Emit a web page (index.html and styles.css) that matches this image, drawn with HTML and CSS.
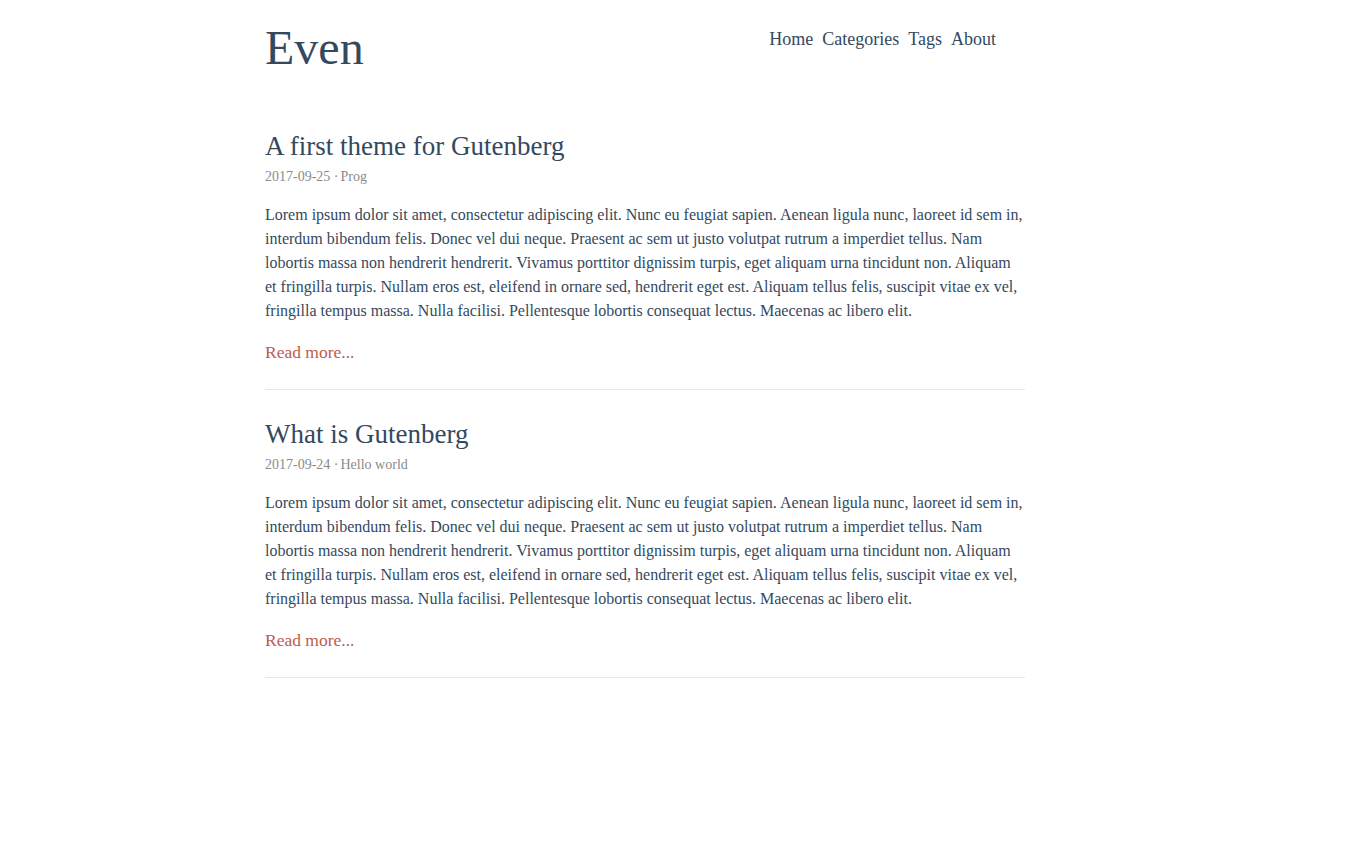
FILE: index.html
```html
<!DOCTYPE html>
<html>
<head>
<meta charset="utf-8">
<title>Even</title>
<link rel="stylesheet" href="styles.css">
</head>
<body>
<div class="container">
  <header class="header">
    <a class="logo" href="#">Even</a>
    <nav class="nav">
      <a href="#">Home</a>
      <a href="#">Categories</a>
      <a href="#">Tags</a>
      <a href="#">About</a>
    </nav>
  </header>
  <main class="posts">
    <article class="post">
      <h1 class="post-title"><a href="#">A first theme for Gutenberg</a></h1>
      <div class="post-meta">2017-09-25 <span class="dot">·</span><a href="#">Prog</a></div>
      <p class="post-summary">Lorem ipsum dolor sit amet, consectetur adipiscing elit. Nunc eu feugiat sapien. Aenean ligula nunc, laoreet id sem in, interdum bibendum felis. Donec vel dui neque. Praesent ac sem ut justo volutpat rutrum a imperdiet tellus. Nam lobortis massa non hendrerit hendrerit. Vivamus porttitor dignissim turpis, eget aliquam urna tincidunt non. Aliquam et fringilla turpis. Nullam eros est, eleifend in ornare sed, hendrerit eget est. Aliquam tellus felis, suscipit vitae ex vel, fringilla tempus massa. Nulla facilisi. Pellentesque lobortis consequat lectus. Maecenas ac libero elit.</p>
      <a class="read-more" href="#">Read more...</a>
    </article>
    <article class="post">
      <h1 class="post-title"><a href="#">What is Gutenberg</a></h1>
      <div class="post-meta">2017-09-24 <span class="dot">·</span><a href="#">Hello world</a></div>
      <p class="post-summary">Lorem ipsum dolor sit amet, consectetur adipiscing elit. Nunc eu feugiat sapien. Aenean ligula nunc, laoreet id sem in, interdum bibendum felis. Donec vel dui neque. Praesent ac sem ut justo volutpat rutrum a imperdiet tellus. Nam lobortis massa non hendrerit hendrerit. Vivamus porttitor dignissim turpis, eget aliquam urna tincidunt non. Aliquam et fringilla turpis. Nullam eros est, eleifend in ornare sed, hendrerit eget est. Aliquam tellus felis, suscipit vitae ex vel, fringilla tempus massa. Nulla facilisi. Pellentesque lobortis consequat lectus. Maecenas ac libero elit.</p>
      <a class="read-more" href="#">Read more...</a>
    </article>
  </main>
</div>
</body>
</html>
```

FILE: styles.css
```css
html, body {
  margin: 0;
  padding: 0;
  background: #fff;
}
body {
  font-family: "Liberation Serif", "Times New Roman", serif;
  color: #34495e;
}
a {
  text-decoration: none;
  color: inherit;
}
.container {
  width: 760px;
  margin-left: 265px;
}
.header {
  display: flex;
  justify-content: space-between;
  align-items: flex-start;
  padding-top: 20px;
  height: 102px;
  box-sizing: border-box;
}
.logo {
  font-size: 48px;
  line-height: 56px;
}
.nav {
  display: flex;
  gap: 9px;
  margin-right: 29px;
  font-size: 18px;
  line-height: 24px;
  padding-top: 7px;
}
.post {
  padding: 24px 0 25px;
  border-bottom: 1px solid #e6e6e6;
}
.post-title {
  margin: 0;
  font-weight: normal;
  font-size: 27px;
  line-height: 40px;
}
.post-meta {
  font-size: 14px;
  line-height: 20px;
  color: #8a8a8a;
  margin-top: 1px;
}
.post-meta .dot {
  margin-right: 2px;
}
.post-summary {
  margin: 16px 0 17px;
  font-size: 16px;
  line-height: 24px;
}
.read-more {
  display: inline-block;
  font-size: 17.5px;
  line-height: 24px;
  color: #c05b4d;
}
```
